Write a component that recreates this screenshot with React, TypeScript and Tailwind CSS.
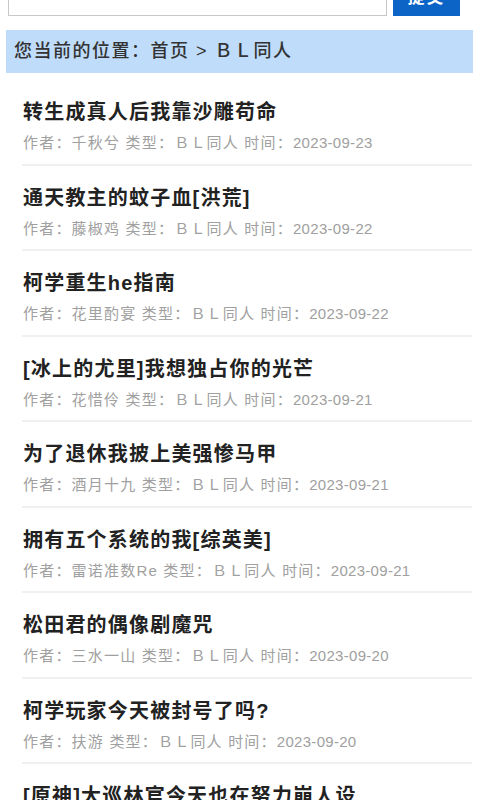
const books = [
  { title: "转生成真人后我靠沙雕苟命", author: "千秋兮", date: "2023-09-23" },
  { title: "通天教主的蚊子血[洪荒]", author: "藤椒鸡", date: "2023-09-22" },
  { title: "柯学重生he指南", author: "花里酌宴", date: "2023-09-22" },
  { title: "[冰上的尤里]我想独占你的光芒", author: "花惜伶", date: "2023-09-21" },
  { title: "为了退休我披上美强惨马甲", author: "酒月十九", date: "2023-09-21" },
  { title: "拥有五个系统的我[综英美]", author: "雷诺准数Re", date: "2023-09-21" },
  { title: "松田君的偶像剧魔咒", author: "三水一山", date: "2023-09-20" },
  { title: "柯学玩家今天被封号了吗?", author: "扶游", date: "2023-09-20" },
  { title: "[原神]大巡林官今天也在努力崩人设", author: "", date: "2023-09-19" },
];

const App = () => {
  return (
    <div
      className="w-[480px] h-[800px] overflow-hidden bg-white"
      style={{ fontFamily: '"Liberation Sans", "Noto Sans CJK SC", sans-serif' }}
    >
      <div className="flex items-end gap-[6px] pl-[8px] pr-[20px] -mt-[22px]">
        <div className="flex-1 h-[37px] border border-[#c8c8c8] bg-white" />
        <button className="w-[67px] h-[38px] bg-[#0b64c6] text-white text-[17px] font-bold tracking-[2px] pt-[2px]">
          提交
        </button>
      </div>

      <div className="mx-[6px] mr-[7px] mt-[14px] h-[43px] bg-[#bfdcfa] flex items-center pl-[8px] text-[18px] tracking-[1.5px] text-[#333] font-medium">
        您当前的位置：首页 &gt; ＢＬ同人
      </div>

      <ul className="ml-[22px] mr-[8px] mt-[7px]">
        {books.map((b, i) => (
          <li key={i} className="pt-[18px] pb-[10.5px] border-b-2 border-[#f0f0f0]">
            <div className="pl-px h-[28px] leading-[28px] text-[20px] font-bold text-[#222] tracking-[1.2px] whitespace-nowrap">
              {b.title}
            </div>
            <div className="mt-[7px] pl-px h-[20px] leading-[20px] text-[15px] text-[#a0a0a0] tracking-[1.2px] whitespace-nowrap">
              作者：{b.author} 类型：ＢＬ同人 时间：
              <span className="tracking-[0.3px]">{b.date}</span>
            </div>
          </li>
        ))}
      </ul>
    </div>
  );
};

export default App;
